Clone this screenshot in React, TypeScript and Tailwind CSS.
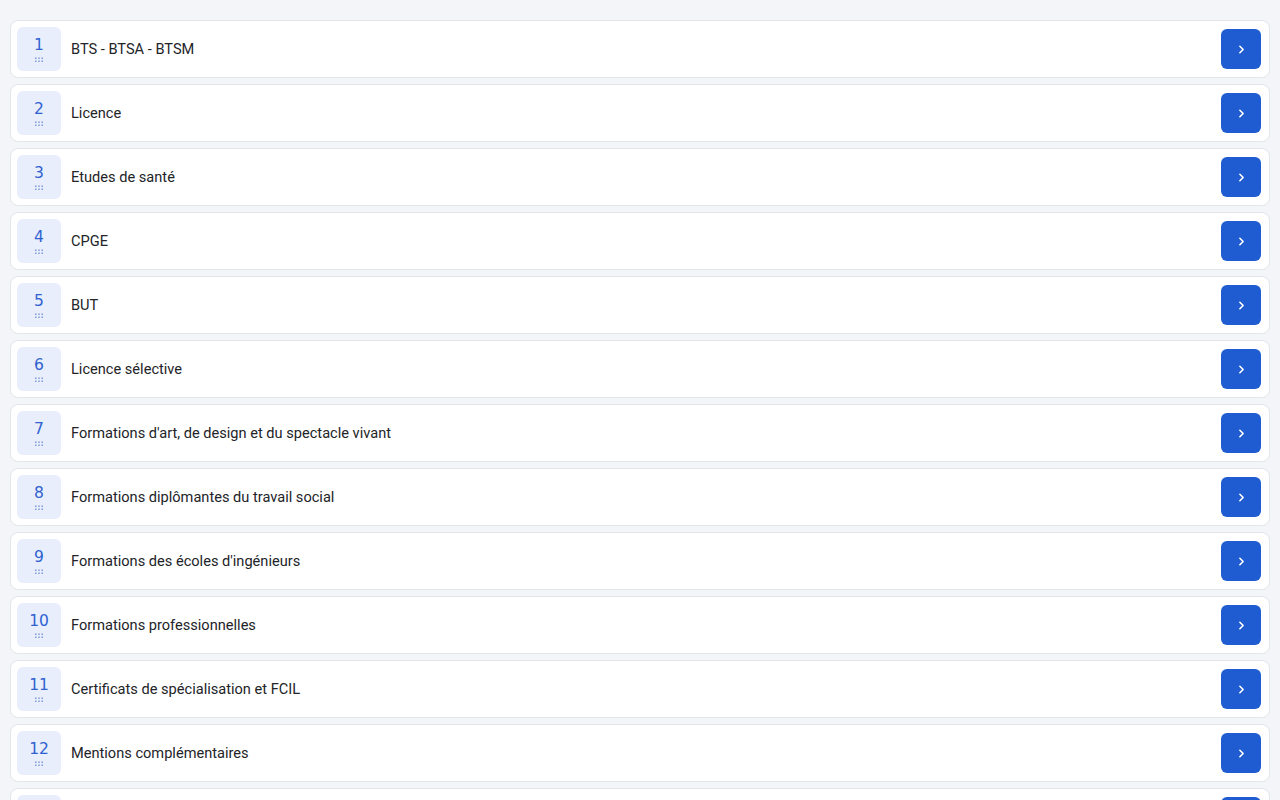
import React from 'react';
import { ChevronRight } from 'lucide-react';

const formations: string[] = [
    'BTS - BTSA - BTSM',
    'Licence',
    'Etudes de santé',
    'CPGE',
    'BUT',
    'Licence sélective',
    "Formations d'art, de design et du spectacle vivant",
    'Formations diplômantes du travail social',
    "Formations des écoles d'ingénieurs",
    'Formations professionnelles',
    'Certificats de spécialisation et FCIL',
    'Mentions complémentaires',
    'Formations des écoles de commerce et de management',
];

// small 3x2 dot grip shown under the rank
const Grip = () => (
    <svg width="10" height="5" viewBox="0 0 10 5" className="mt-[3px] fill-[#7d9be0]">
        <rect x="1" y="0.5" width="1.5" height="1.5" />
        <rect x="4.25" y="0.5" width="1.5" height="1.5" />
        <rect x="7.5" y="0.5" width="1.5" height="1.5" />
        <rect x="1" y="3.5" width="1.5" height="1.5" />
        <rect x="4.25" y="3.5" width="1.5" height="1.5" />
        <rect x="7.5" y="3.5" width="1.5" height="1.5" />
    </svg>
);

const Row: React.FC<{ rank: number; label: string }> = ({ rank, label }) => (
    <div className="flex h-[58px] items-center rounded-lg border border-[#e2e5ea] bg-white pl-[6px] pr-[8px]">
        <div className="flex h-11 w-11 shrink-0 cursor-grab flex-col items-center justify-center rounded-md bg-[#e8eefb] text-[#2f62d0]">
            <span className="font-['DejaVu_Sans',sans-serif] text-[15.5px] leading-[18px]">{rank}</span>
            <Grip />
        </div>
        <span className="ml-[10px] flex-1 truncate pt-[2px] text-[14.6px] text-[#222428]">{label}</span>
        <button className="flex h-10 w-10 shrink-0 items-center justify-center rounded-md bg-[#1f5cd2] text-white">
            <ChevronRight size={13} strokeWidth={3} />
        </button>
    </div>
);

export default function App() {
    return (
        <div className="min-h-screen bg-[#f3f5f8] px-[10px] pt-5 font-['Roboto',sans-serif]">
            <div className="flex flex-col gap-[6px]">
                {formations.map((label, i) => (
                    <Row key={label} rank={i + 1} label={label} />
                ))}
            </div>
        </div>
    );
}
